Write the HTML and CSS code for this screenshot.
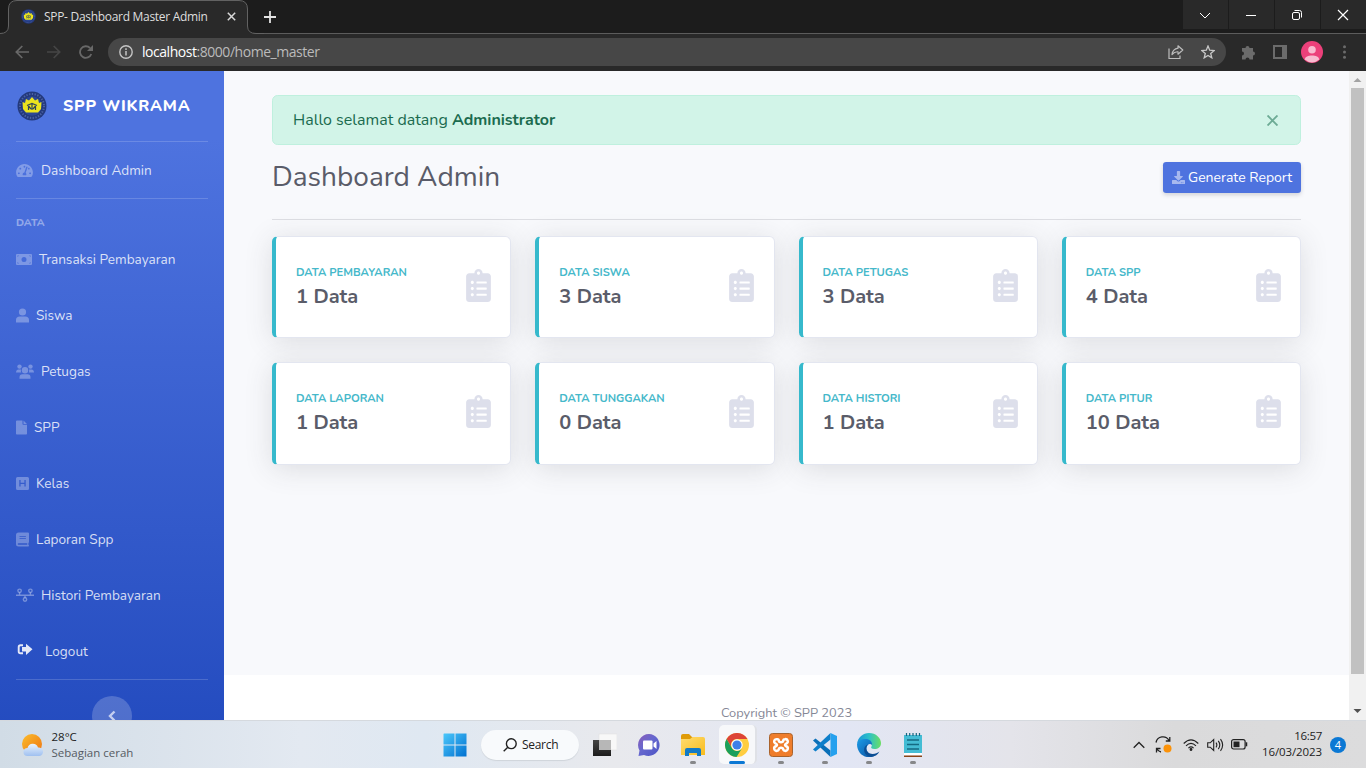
FILE: index.html
```html
<!DOCTYPE html>
<html lang="id">
<head>
<meta charset="utf-8">
<title>SPP- Dashboard Master Admin</title>
<link rel="stylesheet" href="styles.css">
</head>
<body>
<svg width="0" height="0" class="defs">
  <defs>
    <symbol id="clip" viewBox="0 0 384 512"><path fill-rule="evenodd" d="M336 64h-80c0-35.3-28.7-64-64-64s-64 28.7-64 64H48C21.5 64 0 85.5 0 112v352c0 26.5 21.5 48 48 48h288c26.5 0 48-21.5 48-48V112c0-26.5-21.5-48-48-48zM96 424c-13.3 0-24-10.7-24-24s10.7-24 24-24 24 10.7 24 24-10.7 24-24 24zm0-96c-13.3 0-24-10.7-24-24s10.7-24 24-24 24 10.7 24 24-10.7 24-24 24zm0-96c-13.3 0-24-10.7-24-24s10.7-24 24-24 24 10.7 24 24-10.7 24-24 24zm96-192c13.3 0 24 10.7 24 24s-10.7 24-24 24-24-10.7-24-24 10.7-24 24-24zM168 384h144q8 0 8 8v16q0 8-8 8H168q-8 0-8-8v-16q0-8 8-8zM168 288h144q8 0 8 8v16q0 8-8 8H168q-8 0-8-8v-16q0-8 8-8zM168 192h144q8 0 8 8v16q0 8-8 8H168q-8 0-8-8v-16q0-8 8-8z"/></symbol>
    <symbol id="crest" viewBox="0 0 30 30">
      <circle cx="15" cy="15" r="14.5" fill="#23397c"/>
      <circle cx="15" cy="15" r="12" fill="none" stroke="#4c62a4" stroke-width="2" stroke-dasharray="1.3 1.5"/>
      <circle cx="15" cy="15" r="9.8" fill="#2c4795"/>
      <path fill="#ece41e" d="M5.500 11l2.500 1 1-4 3 1.500 3-3.500 3 3.500 3-1.500 1 4 2.500-1-.5 7-3 3.500H9L6 18z"/>
      <path fill="none" stroke="#31465a" stroke-width="1.200" d="M10 14.500l5-2 5 2M11.500 15v4M11.500 15l2.500 3M18.500 15v4M18.500 15L16 18M15 13v6"/>
    </symbol>
    <linearGradient id="win" x1="0" y1="0" x2="1" y2="1"><stop offset="0" stop-color="#4cc8fb"/><stop offset="1" stop-color="#0070d0"/></linearGradient>
    <linearGradient id="sun" x1="0" y1="0" x2="1" y2="1"><stop offset="0" stop-color="#fbbd2c"/><stop offset="1" stop-color="#ee7412"/></linearGradient>
    <linearGradient id="cloud" x1="0" y1="0" x2="0" y2="1"><stop offset="0" stop-color="#e9f3fd"/><stop offset="1" stop-color="#9fc0f0"/></linearGradient>
    <linearGradient id="chat" x1="0" y1="0" x2="1" y2="1"><stop offset="0" stop-color="#8a5cb8"/><stop offset=".45" stop-color="#6668cf"/><stop offset="1" stop-color="#4c54c4"/></linearGradient>
    <linearGradient id="folder" x1="0" y1="0" x2="1" y2="1"><stop offset="0" stop-color="#ffdc70"/><stop offset="1" stop-color="#f8bc1e"/></linearGradient>
    <linearGradient id="edge1" x1="0" y1="0" x2="1" y2="0"><stop offset="0" stop-color="#1b94d8"/><stop offset=".5" stop-color="#2cc0c8"/><stop offset="1" stop-color="#6ade62"/></linearGradient>
    <linearGradient id="edge2" x1="0" y1="0" x2="1" y2="1"><stop offset="0" stop-color="#1a9be8"/><stop offset="1" stop-color="#0b4f9e"/></linearGradient>
    <linearGradient id="dark" x1="0" y1="0" x2="0" y2="1"><stop offset="0" stop-color="#454545"/><stop offset="1" stop-color="#1c1c1c"/></linearGradient>
  </defs>
</svg>
<div class="screen">
  <header class="titlebar">
    <svg class="tab-shape" width="264" height="34" viewBox="0 0 264 34"><path d="M0 33.500Q8.500 33.500 8.500 26V9Q8.500 .5 17 .5H239Q247.500 .5 247.500 9V26Q247.500 33.500 256 33.500H264V34H0z" fill="#292929"/><path d="M0 33.500Q8.500 33.500 8.500 26V9Q8.500 .5 17 .5H239Q247.500 .5 247.500 9V26Q247.500 33.500 256 33.500H264" fill="none" stroke="#626262"/></svg>
    <div class="tab">
      <svg width="15" height="15"><use href="#crest"/></svg>
      <span class="tab-title">SPP- Dashboard Master Admin</span>
      <svg width="9" height="9" viewBox="0 0 9 9"><path d="M.8.8l7.400 7.400M8.200.8L.8 8.200" stroke="#d8d8d8" stroke-width="1.500"/></svg>
    </div>
    <svg class="plus" width="12" height="12" viewBox="0 0 12 12"><path d="M6 0v12M0 6h12" stroke="#e3e3e3" stroke-width="1.800"/></svg>
    <div class="win-buttons">
      <span><svg width="12" height="12" viewBox="0 0 12 12"><path d="M1 4l5 5 5-5" fill="none" stroke="#fff"/></svg></span>
      <span><svg width="12" height="12" viewBox="0 0 12 12"><path d="M1 6.500h10" stroke="#fff"/></svg></span>
      <span><svg width="12" height="12" viewBox="0 0 12 12" fill="none" stroke="#fff"><rect x="1.500" y="3.500" width="7" height="7" rx="1.500"/><path d="M3.500 1.500H8.500Q10.500 1.500 10.500 3.500V8.500"/></svg></span>
      <span><svg width="12" height="12" viewBox="0 0 12 12"><path d="M1 1l10 10M11 1L1 11" stroke="#fff" stroke-width="1.200"/></svg></span>
    </div>
  </header>
  <div class="toolbar">
    <svg class="nav" width="14" height="14" viewBox="0 0 14 14" fill="none" stroke="#686868" stroke-width="1.700"><path d="M14 7H1.500M7.300 1L1.300 7l6 6"/></svg>
    <svg class="nav" width="14" height="14" viewBox="0 0 14 14" fill="none" stroke="#454545" stroke-width="1.700"><path d="M0 7h12.500M6.700 1l6 6-6 6"/></svg>
    <svg class="nav" width="14" height="14" viewBox="0 0 14 14"><path d="M12.300 9A5.800 5.800 0 1 1 11 3" fill="none" stroke="#686868" stroke-width="1.800"/><path d="M14 0v6H8z" fill="#686868"/></svg>
    <div class="omnibox">
      <svg width="14" height="14" viewBox="0 0 14 14"><circle cx="7" cy="7" r="6.200" fill="none" stroke="#c4c4c4" stroke-width="1.400"/><path d="M7 6v4.500M7 3.300v1.600" stroke="#c4c4c4" stroke-width="1.500"/></svg>
      <span class="url"><b>localhost</b>:8000/home_master</span>
      <svg class="share" width="16" height="14" viewBox="0 0 16 14" fill="none" stroke="#bdbdbd" stroke-width="1.200"><path d="M1 3.500v10h11V10.500"/><path d="M10 .8L14.800 5 10 9.200V6.800Q6.500 6.500 4 9.500 4.800 4 10 3.200z" stroke-linejoin="round"/></svg>
      <svg width="14" height="14" viewBox="0 0 14 14" fill="none" stroke="#c8c8c8" stroke-width="1.300"><path d="M7 1l1.700 4.200 4.500.3-3.500 2.900 1.100 4.400L7 10.400l-3.800 2.400 1.100-4.400L.8 5.500l4.500-.3z"/></svg>
    </div>
    <svg class="puzzle" width="15" height="15" viewBox="0 0 15 15" fill="#6b6b6b"><path d="M1 3h3.500a2 2 0 1 1 4 0H12v3.500a2 2 0 1 1 0 4V14.500H8.500a2 2 0 0 0-4 0H1V10.500a2 2 0 0 0 0-4z"/></svg>
    <svg class="panel" width="14" height="14" viewBox="0 0 14 14"><path fill-rule="evenodd" fill="#6b6b6b" d="M0 0h14v14H0zM2 2v10h7V2z"/></svg>
    <svg class="avatar" width="22" height="22" viewBox="0 0 22 22"><circle cx="11" cy="11" r="11" fill="#ec407a"/><circle cx="11" cy="8.700" r="3.800" fill="#f8bbd0"/><path d="M3.700 18.500C4 13 18 13 18.300 18.500Q11 24.500 3.700 18.500z" fill="#f8bbd0"/></svg>
    <svg class="dots" width="3" height="14" viewBox="0 0 3 14" fill="#6b6b6b"><circle cx="1.500" cy="1.800" r="1.500"/><circle cx="1.500" cy="7" r="1.500"/><circle cx="1.500" cy="12.200" r="1.500"/></svg>
  </div>

  <div class="page">
    <nav class="sidebar">
      <div class="brand"><svg width="30" height="30"><use href="#crest"/></svg><span>SPP WIKRAMA</span></div>
      <hr>
      <a class="item first"><svg width="17" height="15" viewBox="0 0 576 512"><path d="M288 32C128.940 32 0 160.940 0 320c0 52.800 14.250 102.260 39.060 144.800 5.610 9.620 16.300 15.200 27.440 15.200h443c11.140 0 21.830-5.580 27.440-15.200C561.750 422.260 576 372.800 576 320c0-159.060-128.940-288-288-288zm0 64c14.710 0 26.580 10.130 30.320 23.650-1.110 2.260-2.640 4.230-3.450 6.670l-9.220 27.670c-5.130 3.490-10.970 6.010-17.640 6.010-17.670 0-32-14.330-32-32S270.330 96 288 96zM96 384c-17.670 0-32-14.330-32-32s14.330-32 32-32 32 14.330 32 32-14.330 32-32 32zm48-160c-17.670 0-32-14.330-32-32s14.330-32 32-32 32 14.330 32 32-14.330 32-32 32zm246.770-72.410l-61.330 184C343.130 347.330 352 364.540 352 384c0 11.720-3.380 22.550-8.880 32H232.880c-5.500-9.450-8.880-20.280-8.880-32 0-33.940 26.500-61.430 59.900-63.590l61.340-184.010c4.170-12.560 17.730-19.450 30.360-15.170 12.570 4.190 19.350 17.790 15.170 30.360zm14.660 57.200l15.520-46.550c3.470-1.290 7.130-2.230 11.050-2.230 17.670 0 32 14.330 32 32s-14.330 32-32 32c-11.380-.01-20.890-6.280-26.570-15.220zM480 384c-17.670 0-32-14.330-32-32s14.330-32 32-32 32 14.330 32 32-14.330 32-32 32z"/></svg><span>Dashboard Admin</span></a>
      <hr>
      <div class="heading">DATA</div>
      <a class="item"><svg width="16" height="13" viewBox="0 0 16 13"><path fill-rule="evenodd" d="M1 1h14q1 0 1 1v9q0 1-1 1H1q-1 0-1-1V2q0-1 1-1zM8 4a2.500 2.500 0 1 0 0 5 2.500 2.500 0 0 0 0-5zM1.500 2.500V4L3 2.500zM14.500 2.500H13L14.500 4zM1.500 10.500H3L1.500 9zM14.500 10.500V9L13 10.500z"/></svg><span>Transaksi Pembayaran</span></a>
      <a class="item"><svg width="13" height="15" viewBox="0 0 13 15"><circle cx="6.500" cy="4" r="3.600"/><path d="M0 14.500V12q0-3.500 3.800-3.500h5.400Q13 8.500 13 12v2.500z"/></svg><span>Siswa</span></a>
      <a class="item"><svg width="18" height="15" viewBox="0 0 18 15"><circle cx="3.500" cy="2.600" r="2.200"/><circle cx="14.500" cy="2.600" r="2.200"/><circle cx="9" cy="6.300" r="3.200"/><path d="M0 8.500Q.2 5.500 2.500 5.500H5q-.5 2 .3 3zM18 8.500q-.2-3-2.500-3H13q.5 2-.3 3zM3.500 14.700v-1.500q0-3 3-3h5q3 0 3 3v1.500z"/></svg><span>Petugas</span></a>
      <a class="item"><svg width="11" height="15" viewBox="0 0 11 15"><path d="M1 .5h5.500V4q0 .8.8.8H11V13.700q0 .8-.8.8H.8q-.8 0-.8-.8V1.300Q0 .5 1 .5zM7.500.5L11 4H7.500z"/></svg><span>SPP</span></a>
      <a class="item"><svg width="13" height="15" viewBox="0 0 13 15"><path fill-rule="evenodd" d="M1.500 1h10q1.500 0 1.500 1.500v10q0 1.500-1.500 1.500h-10Q0 14 0 12.500v-10Q0 1 1.500 1zM3.300 4v6.500h1.300V8h3.800v2.500h1.300V4H8.400v2.700H4.600V4z"/></svg><span>Kelas</span></a>
      <a class="item"><svg width="13" height="15" viewBox="0 0 13 15"><path fill-rule="evenodd" d="M2.500.5H12q1 0 1 1V10q0 .7-.6 1v1.800q.6.3.6.9t-.8.800H2.500Q0 14.500 0 12V3Q0 .5 2.500.5zM3.500 4v.8h6.400V4zM3.500 6.300v.8h6.400v-.8zM2.500 11.200Q1.700 11.200 1.700 12t.8.800h8.800v-1.600z"/></svg><span>Laporan Spp</span></a>
      <a class="item"><svg width="18" height="15" viewBox="0 0 18 15"><g class="chain"><circle cx="3.600" cy="2.800" r="1.700"/><circle cx="14.400" cy="2.800" r="1.700"/><circle cx="9" cy="11.500" r="1.700"/><path d="M0 7.200h18M3.600 4.500v2.700M14.400 4.500v2.700M9 7.200v2.600"/></g></svg><span>Histori Pembayaran</span></a>
      <a class="item logout"><svg width="16" height="14" viewBox="0 0 16 14"><path d="M6 2.200H3.500Q1.700 2.200 1.700 4v4.500q0 1.800 1.800 1.800H6" fill="none" stroke="#e5e9f8" stroke-width="1.900"/><path d="M5 4h4V.8L15.500 6.300 9 12V8.500H5z" fill="#e5e9f8"/></svg><span>Logout</span></a>
      <hr>
      <div class="toggle"><svg width="8" height="12" viewBox="0 0 8 12"><path d="M6.500 1.500L2 6l4.500 4.500" fill="none" stroke="#c4cef0" stroke-width="2.400"/></svg></div>
    </nav>
    <div class="main">
      <div class="content">
        <div class="alert"><span>Hallo selamat datang <b>Administrator</b></span><svg width="11" height="11" viewBox="0 0 11 11"><path d="M.5.500l10 10M10.500.5L.5 10.500" stroke="#6dab95" stroke-width="1.900"/></svg></div>
        <div class="head"><h1>Dashboard Admin</h1><a class="report"><svg width="13" height="13" viewBox="0 0 512 512"><path fill="#a7b9ef" d="M216 0h80c13.300 0 24 10.700 24 24v168h87.700c17.800 0 26.700 21.500 14.100 34.100L269.700 378.300c-7.500 7.500-19.800 7.500-27.300 0L90.100 226.100c-12.600-12.600-3.700-34.100 14.100-34.100H192V24c0-13.300 10.700-24 24-24zm296 376v112c0 13.300-10.700 24-24 24H24c-13.300 0-24-10.700-24-24V376c0-13.300 10.700-24 24-24h146.700l49 49c20.100 20.100 52.500 20.100 72.600 0l49-49H488c13.300 0 24 10.700 24 24zm-124 88c0-11-9-20-20-20s-20 9-20 20 9 20 20 20 20-9 20-20zm64 0c0-11-9-20-20-20s-20 9-20 20 9 20 20 20 20-9 20-20z"/></svg><span>Generate Report</span></a></div>
        <hr class="rule">
        <div class="cards">
          <div class="card"><div><h2>DATA PEMBAYARAN</h2><p>1 Data</p></div><svg class="clip"><use href="#clip"/></svg></div>
          <div class="card"><div><h2>DATA SISWA</h2><p>3 Data</p></div><svg class="clip"><use href="#clip"/></svg></div>
          <div class="card"><div><h2>DATA PETUGAS</h2><p>3 Data</p></div><svg class="clip"><use href="#clip"/></svg></div>
          <div class="card"><div><h2>DATA SPP</h2><p>4 Data</p></div><svg class="clip"><use href="#clip"/></svg></div>
          <div class="card"><div><h2>DATA LAPORAN</h2><p>1 Data</p></div><svg class="clip"><use href="#clip"/></svg></div>
          <div class="card"><div><h2>DATA TUNGGAKAN</h2><p>0 Data</p></div><svg class="clip"><use href="#clip"/></svg></div>
          <div class="card"><div><h2>DATA HISTORI</h2><p>1 Data</p></div><svg class="clip"><use href="#clip"/></svg></div>
          <div class="card"><div><h2>DATA PITUR</h2><p>10 Data</p></div><svg class="clip"><use href="#clip"/></svg></div>
        </div>
      </div>
      <footer>Copyright © SPP 2023</footer>
    </div>
    <div class="scroll">
      <svg width="17" height="17" viewBox="0 0 17 17"><path d="M4.500 11l4-4 4 4z" fill="#a3a3a3"/></svg>
      <div class="thumb"></div>
      <svg width="17" height="17" viewBox="0 0 17 17"><path d="M4.500 6l4 4 4-4z" fill="#505050"/></svg>
    </div>
  </div>

  <div class="taskbar">
    <div class="weather">
      <svg width="24" height="24" viewBox="0 0 24 24"><circle cx="11" cy="11" r="10" fill="url(#sun)"/><path d="M6.500 23a4 4 0 0 1 0-8 5.500 5.500 0 0 1 10.500-.5 4.300 4.300 0 0 1 1.500 8.500z" fill="url(#cloud)"/></svg>
      <div><div class="temp">28°C</div><div class="sky">Sebagian cerah</div></div>
    </div>
    <div class="apps">
      <svg class="start" width="24" height="24" viewBox="0 0 24 24" fill="url(#win)"><path d="M1 .5h10.500V11.500H.5V1zM12.500.5H23.500V11.500H12.500zM.5 12.500H11.500V23.500H.5zM12.500 12.500H23.500V23.500H12.500z"/></svg>
      <div class="search"><svg width="14" height="14" viewBox="0 0 14 14" fill="none" stroke="#222" stroke-width="1.400"><circle cx="8.300" cy="5.700" r="4.900"/><path d="M4.800 9.200L.7 13.300"/></svg><span>Search</span></div>
      <div class="app"><svg width="24" height="24" viewBox="0 0 24 24"><rect x="6" y="1" width="18" height="16" fill="#f8f8f8" stroke="#dedede" stroke-width=".5"/><rect x="0" y="7" width="18" height="16" fill="url(#dark)"/><rect x="6" y="7" width="12" height="10" fill="#b7b7b7"/></svg></div>
      <div class="app"><svg width="24" height="24" viewBox="0 0 24 24"><path d="M12 1a11 11 0 1 1-5 21l-5.500 1 1-5.500A11 11 0 0 1 12 1z" fill="url(#chat)"/><rect x="6" y="7.500" width="9.500" height="9" rx="1" fill="#fff"/><path d="M16.500 10.500l3-2.500v8l-3-2.500z" fill="#fff"/></svg></div>
      <div class="app run"><svg width="24" height="24" viewBox="0 0 24 24"><path d="M0 3q0-2 2-2h6l3 3h11v8H0z" fill="#df9b08"/><path d="M0 6h9l2.500-2H22q2 0 2 2v16H0z" fill="url(#folder)"/><path d="M4 23v-6q0-2 2-2h12q2 0 2 2v6h-4v-3H8v3z" fill="#137ac5"/></svg></div>
      <div class="app chrome"><svg width="24" height="24" viewBox="0 0 24 24"><circle cx="12" cy="12" r="12" fill="#ffcd40"/><path d="M1.600 6A12 12 0 0 1 22.400 6H12A6 6 0 0 0 6.800 15z" fill="#dd4437"/><path d="M1.600 6A12 12 0 0 0 11.500 24L17.200 15A6 6 0 0 1 6.800 15z" fill="#1a9f5b"/><circle cx="12" cy="12" r="5.700" fill="#fff"/><circle cx="12" cy="12" r="4.600" fill="#3f7fe8"/></svg></div>
      <div class="app run"><svg width="24" height="24" viewBox="0 0 24 24"><rect x=".5" y=".5" width="23" height="23" rx="3" fill="#ef7d2b" stroke="#a9632d"/><path d="M8.500 6.200H8a2.300 2.300 0 0 0-1 4.500q2 1.300 0 2.600a2.300 2.300 0 0 0 1 4.500q1.800 0 2-2.300 2-1.600 4 0 .2 2.300 2 2.300a2.300 2.300 0 0 0 1-4.500q-2-1.300 0-2.600a2.300 2.300 0 0 0-1-4.500q-1.800 0-2 2.300-2 1.600-4 0-.2-2.300-1.500-2.300z" fill="none" stroke="#fff" stroke-width="2.500"/></svg></div>
      <div class="app run"><svg width="24" height="24" viewBox="0 0 24 24"><path d="M2.500 5.500L0 7.500 17.500 24V17.500z" fill="#0a6fb8"/><path d="M17.500 0v6.500L2.500 18.500 0 16.500z" fill="#0f7fca"/><path d="M17.500 0L24 3v18l-6.500 3z" fill="#26a1ee"/></svg></div>
      <div class="app run"><svg width="24" height="24" viewBox="0 0 24 24"><path d="M0 11C1 4 6 0 12 0c7 0 12 5 12 10 0 4-3 6-6.500 6-3 0-4-1.200-3-2.500C16 10 13 7 9 7 4.500 7 1 9 0 11z" fill="url(#edge1)"/><path d="M0 11c1-3 4.500-5 8.500-5 4.500 0 7 3 6.500 6-2-2-5-.5-5.500 3C9 20 14 23 18 22.500 11 27 0 22.500 0 11z" fill="url(#edge2)"/><path d="M11 11.500c-4 4-.5 9.500 4.500 9.500 3 0 5-1 7-2.500-3 6-10 6.500-13.500 3-3-3-2.500-9 2-10z" fill="#0c4e94"/></svg></div>
      <div class="app run"><svg width="24" height="24" viewBox="0 0 24 24"><rect x="3" y="2" width="18" height="18" fill="#44bcd4"/><path d="M3 20h18v2.500H3z" fill="#fff"/><path d="M3 22.500h18V24H3z" fill="#8a4518"/><path d="M5.500 0v3M8.700 0v3M12 0v3M15.300 0v3M18.500 0v3" stroke="#176680" stroke-width="1.200"/><path d="M6 7h12M6 11.500h12M6 16h12" stroke="#146a82" stroke-width="1.400"/></svg></div>
    </div>
    <div class="tray">
      <svg width="12" height="8" viewBox="0 0 12 8"><path d="M.7 6.800L6 1.500l5.300 5.300" fill="none" stroke="#222" stroke-width="1.300"/></svg>
      <svg class="sync" width="17" height="17" viewBox="0 0 17 17"><path d="M1 6.500a7 7 0 0 1 13-2M14.800 1v4h-4M5.500 12.500h-4v4M2 13q1.500 2.500 4 3" fill="none" stroke="#222" stroke-width="1.300"/><circle cx="12.500" cy="12.500" r="4" fill="#fb9209"/></svg>
      <svg class="wifi" width="16" height="12" viewBox="0 0 16 12" fill="none" stroke="#222" stroke-width="1.100"><path d="M.7 4.500Q8-2.800 15.300 4.500M3 6.900q5-4.900 10 0M5.400 9.200q2.600-2.500 5.200 0"/><circle cx="8" cy="10.500" r=".9" fill="#222"/></svg>
      <svg class="vol" width="17" height="14" viewBox="0 0 17 14" fill="none" stroke="#222" stroke-width="1.100"><path d="M.7 4.800h2.500L6.700 1.500v11L3.200 9.200H.7zM9 4.700q1.700 2.300 0 4.600M11.300 2.900q3 4.100 0 8.200M13.500 1.200q4.300 5.800 0 11.600"/></svg>
      <svg class="bat" width="17" height="11" viewBox="0 0 17 11"><rect x=".6" y=".6" width="13.500" height="9.400" rx="2" fill="none" stroke="#222" stroke-width="1.200"/><rect x="2.500" y="2.500" width="6" height="5.700" fill="#222"/><path d="M15.500 3.300v4" stroke="#222" stroke-width="1.500"/></svg>
      <div class="clock"><div class="time">16:57</div><div class="date">16/03/2023</div></div>
      <span class="badge">4</span>
    </div>
  </div>
</div>
</body>
</html>
```
FILE: styles.css
```css
* { box-sizing: border-box; }
body { margin: 0; overflow: hidden; }
svg { display: block; flex: none; }
.defs { position: absolute; }
.screen { width: 1366px; height: 768px; display: flex; flex-direction: column; font-family: "Open Sans", "Noto Sans", sans-serif; }

/* browser frame */
.titlebar { position: relative; height: 34px; flex: none; background: #1c1c1c; border-bottom: 1px solid #5c5c5c; display: flex; align-items: flex-start; }
.tab-shape { position: absolute; left: 0; top: 0; }
.tab { position: relative; width: 248px; height: 33px; padding: 0 12px 0 21px; display: flex; align-items: center; }
.tab-title { flex: 1; margin-left: 8px; font-size: 12px; letter-spacing: -.3px; color: #dedede; white-space: nowrap; }
.plus { position: relative; margin: 11px 0 0 16px; }
.win-buttons { margin-left: auto; display: flex; gap: 1px; }
.win-buttons span { width: 45px; height: 29px; padding-right: 2px; background: #292929; display: grid; place-items: center; }
.toolbar { height: 37px; flex: none; background: #292929; display: flex; align-items: center; padding: 0 0 1px 15px; }
.nav { margin-right: 18px; }
.omnibox { width: 1118px; height: 28px; margin-left: -3px; border-radius: 14px; background: #474747; display: flex; align-items: center; padding: 0 11px; }
.url { margin-left: 9px; padding-bottom: 1px; font-size: 14px; letter-spacing: -.46px; color: #bbb; }
.url b { font-weight: 400; color: #fff; }
.share { margin-left: auto; margin-right: 17px; }
.puzzle { margin-left: 15px; }
.panel { margin-left: 17px; }
.avatar { margin-left: 14px; }
.dots { margin-left: 20px; }

/* web page */
.page { height: 649px; flex: none; display: flex; overflow: hidden; font-family: Nunito, Lato, "Open Sans", sans-serif; }
.sidebar { width: 224px; height: 683px; flex: none; padding: 0 16px; background: linear-gradient(180deg, #4e73df 10%, #224abe 100%); }
.sidebar hr { border: 0; height: 1px; margin: 0; background: rgba(255,255,255,.17); }
.brand { height: 70px; display: flex; align-items: center; gap: 16px; padding-left: 1px; color: #fff; font-size: 16px; font-weight: 800; letter-spacing: .8px; }
.item { height: 56px; display: flex; align-items: center; gap: 7px; font-size: 13.6px; color: rgba(255,255,255,.82); white-space: nowrap; }
.item svg { fill: rgba(255,255,255,.3); }
.chain { fill: none; stroke: rgba(255,255,255,.35); stroke-width: 1.4; }
.item.first { gap: 8px; }
.item.logout svg { margin: 0 5px 2px 1px; }
.heading { height: 32px; padding-top: 16px; font-size: 10.4px; line-height: 16px; font-weight: 800; color: rgba(255,255,255,.42); }
.toggle { width: 40px; height: 40px; margin: 16px auto 0; border-radius: 50%; background: rgba(255,255,255,.2); display: grid; place-items: center; }
.main { width: 1125px; flex: none; background: #fff; }
.content { height: 604px; padding: 24px 48px 0; background: #f8f9fc; }
.alert { height: 50px; padding: 0 22px 0 20px; display: flex; align-items: center; justify-content: space-between; background: #d2f4e8; border: 1px solid #bff0de; border-radius: 5.6px; color: #1b6b4f; font-size: 16px; }
.alert span { padding-bottom: 1px; }
.head { height: 47px; margin-top: 17px; display: flex; justify-content: space-between; }
h1 { margin: -2px 0 0; font-size: 28px; line-height: 34px; font-weight: 400; color: #5a5c69; }
.report { width: 138px; height: 31px; display: flex; align-items: center; gap: 3px; padding-left: 9px; border-radius: 3.2px; background: #4e73df; color: #fff; font-size: 14px; box-shadow: 0 2px 4px rgba(58,59,69,.2); white-space: nowrap; }
.rule { height: 1px; border: 0; margin: 10px 0 16px; background: #dddee3; }
.cards { display: grid; grid-template-columns: repeat(4, 1fr); gap: 24px; }
.card { height: 102.4px; padding: 0 20px; display: flex; align-items: center; justify-content: space-between; background: #fff; border: 1px solid #e3e6f0; border-left: 4px solid #36b9cc; border-radius: 5.6px; box-shadow: 0 4px 28px rgba(58,59,69,.15); }
.card > div { padding-bottom: 1.8px; }
h2 { margin: 0 0 4px; font-size: 11.2px; line-height: 17px; font-weight: 700; color: #45b8ca; }
.card p { margin: 0; font-size: 20px; line-height: 24px; font-weight: 700; color: #5a5c69; }
.clip { width: 25px; height: 33px; fill: #dddfeb; margin-bottom: 3.4px; margin-right: -.8px; }
footer { height: 80px; padding-top: 31px; text-align: center; font-size: 12.8px; line-height: 14px; color: #858796; }
.scroll { width: 17px; background: #f1f1f1; flex: none; }
.thumb { width: 13px; height: 586px; margin: 0 2px 29px; background: #c1c1c1; }

/* taskbar */
.taskbar { height: 48px; flex: none; display: flex; align-items: center; border-top: 1px solid #d5d9de; background: linear-gradient(90deg, #d1dce6 0, #e3e9f1 22%, #dfe8f2 31%, #e8e9ed 45%, #e2e6f4 62%, #e4e4ea 74%, #dadadb 86%, #dcdcdd 100%); color: #222; }
.weather { width: 442.500px; padding-left: 21px; display: flex; align-items: center; gap: 6.500px; font-size: 11.5px; line-height: 16px; }
.sky { color: #555b62; }
.apps { display: flex; align-items: center; height: 47px; }
.search { width: 98px; height: 30px; margin: 0 4px 0 14.500px; border-radius: 15px; background: #f8fafc; display: flex; align-items: center; padding-left: 22px; gap: 5px; font-size: 12px; letter-spacing: -.3px; box-shadow: 0 1px 1px #cfd4da; }
.app { position: relative; width: 44px; height: 40px; display: grid; place-items: center; }
.run::after, .chrome::after { content: ""; position: absolute; left: 19px; bottom: 1px; width: 6px; height: 3px; border-radius: 2px; background: #868789; }
.chrome::before { content: ""; position: absolute; inset: 0 5px 1px 4px; margin-right: -3px; border-radius: 5px; background: #f7f8fa; border-right: 2px solid #dfe1e6; }
.chrome svg { position: relative; }
.chrome::after { left: 14px; width: 16px; background: #0b78d4; }
.tray { margin-left: auto; display: flex; align-items: center; padding-right: 20px; }
.sync { margin-left: 10px; }
.wifi { margin-left: 11px; }
.vol { margin-left: 8px; }
.bat { margin-left: 7px; }
.clock { width: 74px; margin-top: -1px; text-align: right; font-size: 11.5px; line-height: 16px; letter-spacing: -.1px; }
.time { letter-spacing: -.3px; }
.badge { width: 16px; height: 16px; margin-left: 8px; border-radius: 50%; background: #0b78d4; color: #fff; font-size: 11px; line-height: 16px; text-align: center; }
```
